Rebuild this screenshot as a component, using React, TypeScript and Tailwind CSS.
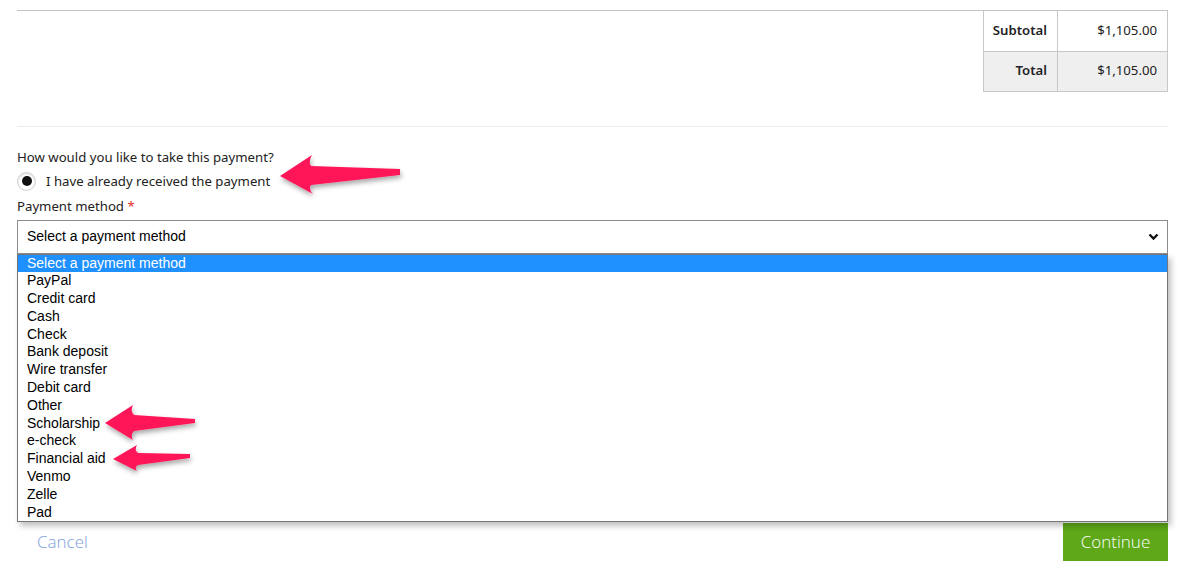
const methods = [
  "Select a payment method",
  "PayPal",
  "Credit card",
  "Cash",
  "Check",
  "Bank deposit",
  "Wire transfer",
  "Debit card",
  "Other",
  "Scholarship",
  "e-check",
  "Financial aid",
  "Venmo",
  "Zelle",
  "Pad",
];

const Arrows = () => (
  <svg className="pointer-events-none absolute left-0 top-0 z-20" width="1182" height="584">
    <defs>
      <filter id="sh" x="-20%" y="-40%" width="140%" height="200%">
        <feDropShadow dx="1" dy="3" stdDeviation="2.5" floodColor="#000" floodOpacity="0.35" />
      </filter>
    </defs>
    <g fill="#ff1659" filter="url(#sh)">
      <path d="M280 176 L312 155 Q308 162 311 166 L400 169 L400 175 L311 185 Q308 189 313 194 Z" />
      <path d="M105 423 L133 405 Q130 411 134 415 L195 419 L195 423 L134 431 Q130 435 133 440 Z" />
      <path d="M113 459 L137 445 Q134 450 138 453 L190 454 L190 458 L138 465 Q134 467 137 471 Z" />
    </g>
  </svg>
);

export default function App() {
  return (
    <div className="relative h-[584px] w-[1182px] overflow-hidden bg-white font-['Noto_Sans',sans-serif] text-[13.2px] text-[#222]">
      <div className="pl-[17px] pr-[14px] pt-[10px]">
        <div className="flex justify-end border-t border-[#c4c4c4]">
          <table className="border-collapse">
            <tbody>
              <tr className="h-[40px]">
                <td className="w-[74px] border border-t-0 border-[#c8c8c8] pr-[10px] text-right font-semibold">Subtotal</td>
                <td className="w-[110px] border border-t-0 border-[#c8c8c8] pr-[10px] text-right">$1,105.00</td>
              </tr>
              <tr className="h-[40px] bg-[#efefef]">
                <td className="border border-[#c8c8c8] pr-[10px] text-right font-semibold">Total</td>
                <td className="border border-[#c8c8c8] pr-[10px] text-right">$1,105.00</td>
              </tr>
            </tbody>
          </table>
        </div>

        <div className="mt-[34px] border-t border-[#ebebeb]" />

        <div className="mt-[21px] leading-[18px]">How would you like to take this payment?</div>
        <div className="mt-[6px] flex items-center">
          <span className="flex h-[19px] w-[19px] items-center justify-center rounded-full border border-[#d0d0d0] bg-white shadow-[inset_0_1px_2px_rgba(0,0,0,0.15)]">
            <span className="h-[10px] w-[10px] rounded-full bg-[#111]" />
          </span>
          <span className="ml-[10px] leading-[18px]">I have already received the payment</span>
        </div>
        <div className="mt-[6px] leading-[18px]">
          Payment method <span className="text-[#e0301e]">*</span>
        </div>

        <div className="relative mt-[5px]">
          <div className="flex h-[34px] items-center justify-between border border-[#8c8c8c] bg-white pl-[9px] pr-[8px] font-['Liberation_Sans',sans-serif] text-[14px] text-black">
            <span>Select a payment method</span>
            <svg width="11" height="8" viewBox="0 0 11 8">
              <path d="M1.5 1.5 L5.5 5.5 L9.5 1.5" fill="none" stroke="#111" strokeWidth="2.4" />
            </svg>
          </div>
          <ul className="absolute left-0 right-0 top-[34px] z-10 border border-[#767676] bg-white font-['Liberation_Sans',sans-serif] text-[14px] text-black shadow-[3px_4px_6px_rgba(0,0,0,0.25)]">
            {methods.map((m, i) => (
              <li
                key={m}
                className={`h-[17.8px] pl-[9px] leading-[17.8px] ${i === 0 ? "bg-[#1e90ff] text-white" : ""}`}
              >
                {m}
              </li>
            ))}
          </ul>
        </div>

        <div className="mt-[269px] flex items-center justify-between">
          <span className="ml-[20px] font-['Open_Sans',sans-serif] text-[17px] font-light text-[#7aa0dc]">Cancel</span>
          <button className="flex h-[38px] w-[105px] items-center justify-center bg-[#5ea81a] font-['Open_Sans',sans-serif] text-[17px] font-light text-white">
            Continue
          </button>
        </div>
      </div>
      <Arrows />
    </div>
  );
}
